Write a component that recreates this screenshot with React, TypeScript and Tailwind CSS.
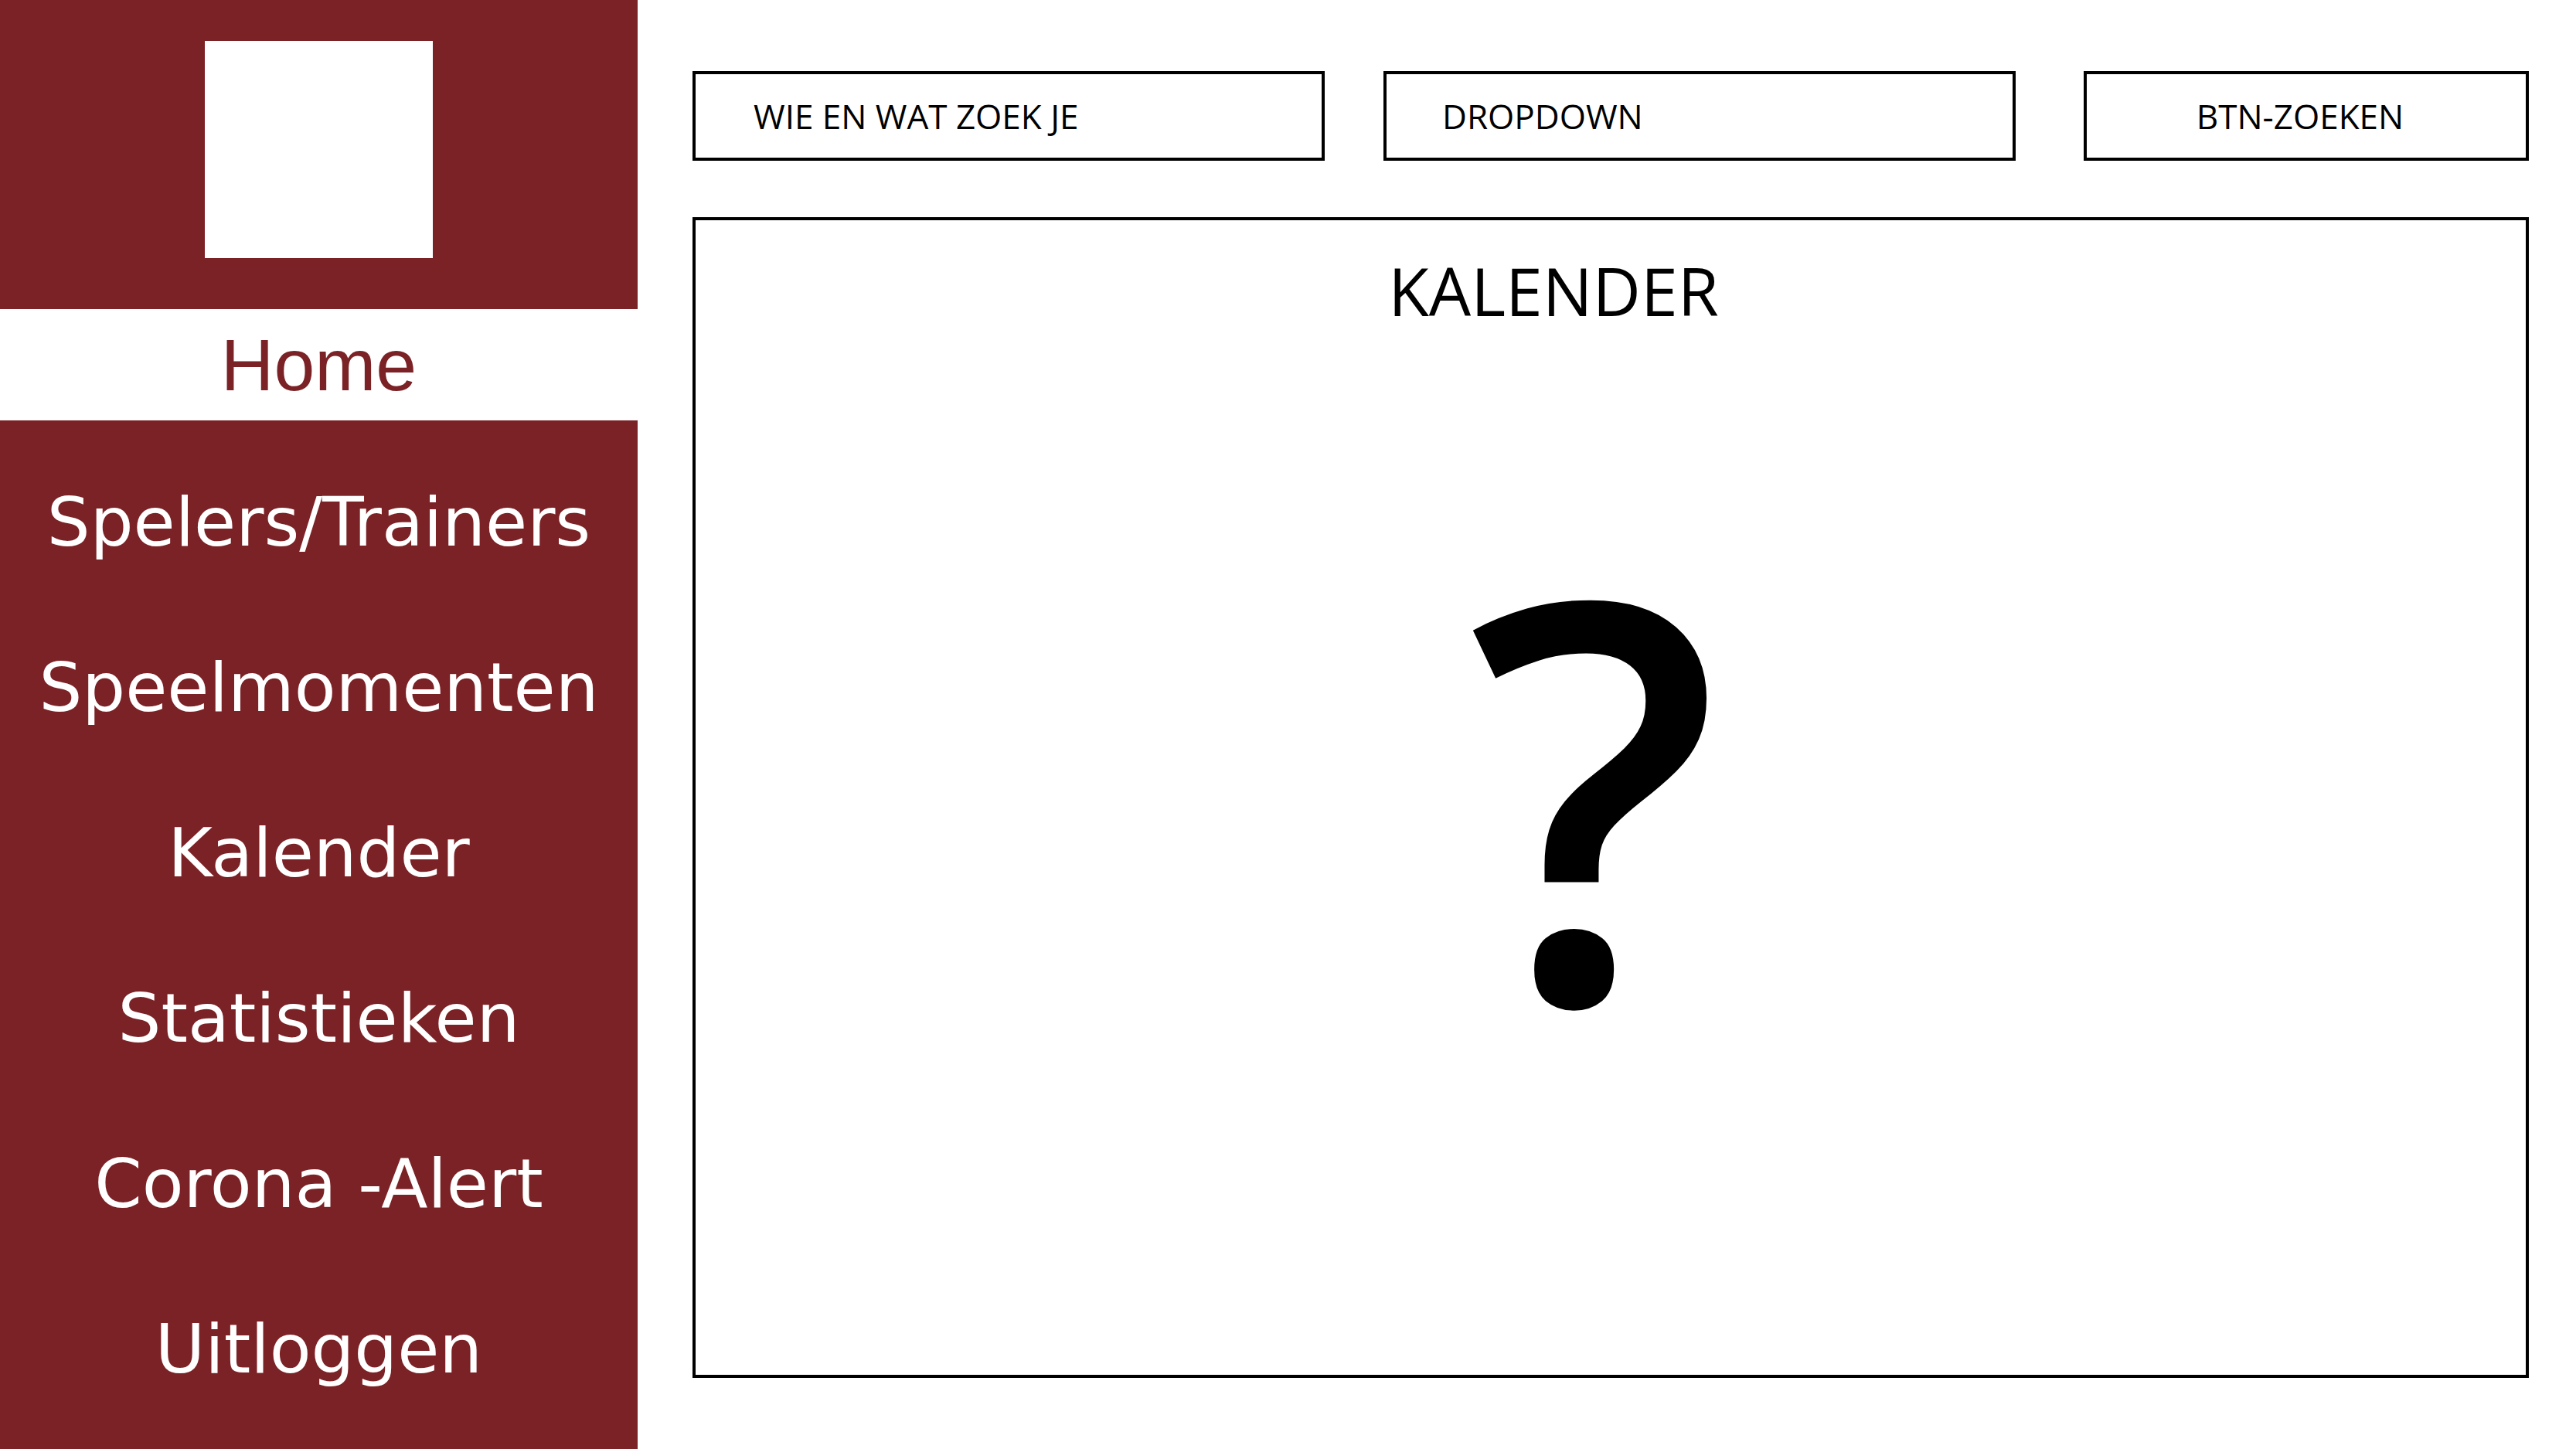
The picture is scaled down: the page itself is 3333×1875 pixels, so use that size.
const NAV = ['Spelers/Trainers', 'Speelmomenten', 'Kalender', 'Statistieken', 'Corona -Alert', 'Uitloggen']

export default function App() {
  return (
    <div className="flex h-[1875px] w-[3333px] bg-white">
      {/* sidebar */}
      <aside className="flex w-[825px] shrink-0 flex-col bg-[#7b2226]">
        <div className="flex h-[400px] justify-center pt-[53px]">
          <div className="h-[281px] w-[295px] bg-white" />
        </div>
        <div className="flex h-[144px] items-center justify-center bg-white">
          <span className="font-['Liberation_Sans',sans-serif] text-[95px] leading-none text-[#7b2226]">Home</span>
        </div>
        <nav className="flex flex-col pt-[25px]">
          {NAV.map((item) => (
            <div key={item} className="flex h-[214px] items-center justify-center">
              <span className="font-['DejaVu_Sans',sans-serif] text-[88px] font-normal leading-none text-white">
                {item}
              </span>
            </div>
          ))}
        </nav>
      </aside>

      {/* main */}
      <main className="flex flex-1 flex-col pb-[92px] pl-[71px] pr-[61px] pt-[92px] font-['Open_Sans',sans-serif] text-black">
        <div className="flex h-[116px] gap-[76px]">
          <div className="flex w-[818px] items-center border-4 border-black pl-[75px]">
            <span className="text-[44px] leading-none">WIE EN WAT ZOEK JE</span>
          </div>
          <div className="flex w-[818px] items-center border-4 border-black pl-[72px]">
            <span className="text-[44px] leading-none">DROPDOWN</span>
          </div>
          <div className="ml-[12px] flex flex-1 items-center justify-center border-4 border-black pr-[16px]">
            <span className="text-[44px] leading-none">BTN-ZOEKEN</span>
          </div>
        </div>

        <section className="mt-[73px] flex flex-1 flex-col border-4 border-black">
          <div className="flex justify-center pr-[148px] pt-[48px]">
            <h1 className="text-[86px] leading-none">KALENDER</h1>
          </div>
          <div className="flex flex-1 items-center justify-center pb-[160px] pr-[42px]">
            <span className="text-[720px] font-semibold leading-none">?</span>
          </div>
        </section>
      </main>
    </div>
  )
}
